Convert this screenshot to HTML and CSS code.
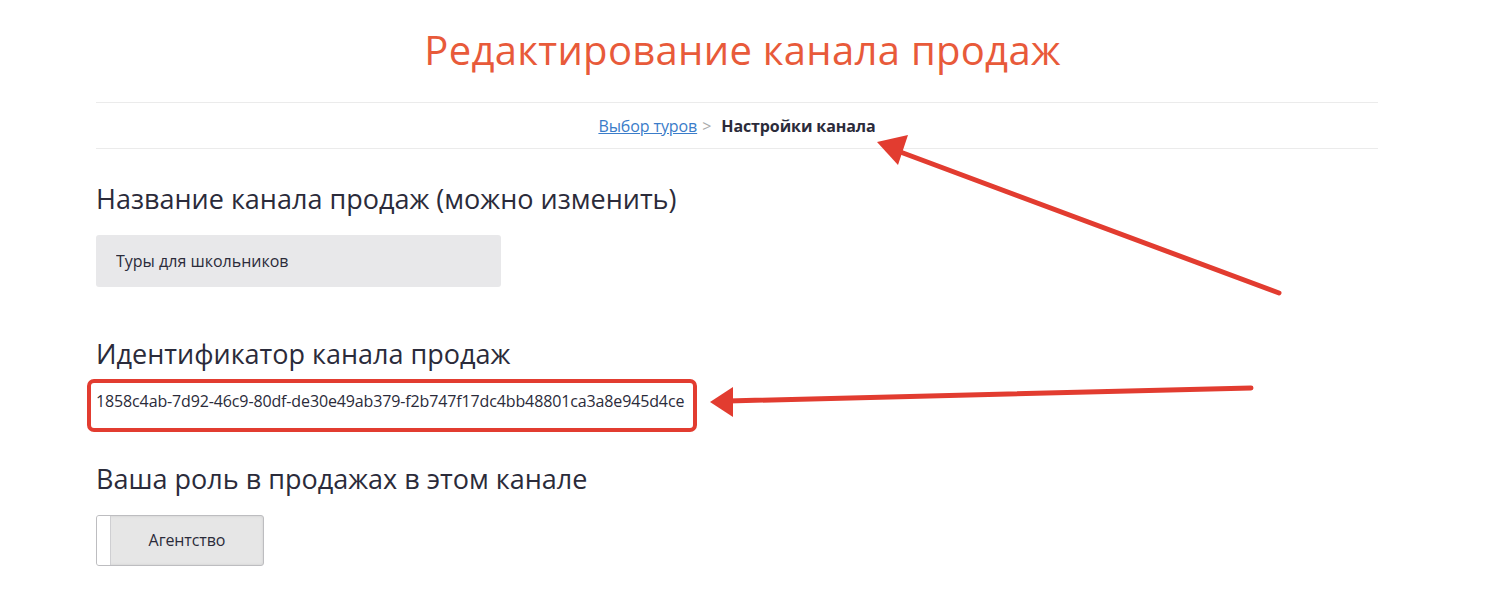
FILE: index.html
```html
<!DOCTYPE html>
<html>

<head lang="ru">
    <meta charset="UTF-8">
    <title>Редактирование канала продаж</title>
    <link rel="stylesheet" href="styles.css">
</head>

<body>
    <h1 class="page-title">Редактирование канала продаж</h1>
    <div class="page">
        <div class="crumbs">
            <a href="javascript:;">Выбор туров</a>
            <span class="crumbs-sep">&gt;</span>
            <b>Настройки канала</b>
        </div>

        <div class="field field-name">
            <h2 class="field-title">Название канала продаж (можно изменить)</h2>
            <input class="field-input" type="text" value="Туры для школьников" />
        </div>

        <div class="field field-id">
            <h2 class="field-title">Идентификатор канала продаж</h2>
            <div class="channel-id">1858c4ab-7d92-46c9-80df-de30e49ab379-f2b747f17dc4bb48801ca3a8e945d4ce</div>
        </div>

        <div class="field field-role">
            <h2 class="field-title">Ваша роль в продажах в этом канале</h2>
            <div class="role-switch">
                <span class="role-knob"></span>
                <span class="role-label">Агентство</span>
            </div>
        </div>
    </div>
    <!-- стрелки-пометки поверх скриншота -->
    <svg class="marks" width="1485" height="596" viewBox="0 0 1485 596">
        <g fill="#e23c30" stroke="#e23c30" stroke-width="5" stroke-linecap="round">
            <line x1="1279" y1="293" x2="895" y2="150" />
            <polygon stroke="none" points="877,142 908,135 898,165" />
            <line x1="1251" y1="388" x2="728" y2="401" />
            <polygon stroke="none" points="710,402 733,387 733,417" />
        </g>
    </svg>
</body>

</html>
```

FILE: styles.css
```css
*,
*::after {
    padding: 0;
    margin: 0;
    box-sizing: border-box;
}

body {
    font-family: "Open Sans", "Noto Sans", sans-serif;
    color: #2b2b3a;
    background: #ffffff;
}

.page-title {
    padding-top: 22px;
    height: 102px;
    text-align: center;
    font-size: 40px;
    font-weight: normal;
    letter-spacing: 0.3px;
    color: #e85a3a;
}

.page {
    width: 1282px;
    margin-left: 96px;
}

.crumbs {
    height: 47px;
    border-top: 1px solid #ebebeb;
    border-bottom: 1px solid #ebebeb;
    display: flex;
    justify-content: center;
    align-items: center;
    gap: 5px;
    font-size: 16px;
    letter-spacing: -0.1px;
}

.crumbs a {
    color: #3a7cc9;
}

.crumbs-sep {
    color: #aaaaaa;
    margin-right: 5px;
}

.crumbs b {
    color: #2b2b3a;
}

.field-title {
    font-size: 27px;
    font-weight: normal;
    line-height: 32px;
}

.field-name {
    margin-top: 34px;
}

.field-id {
    margin-top: 51px;
}

.field-role {
    margin-top: 40px;
}

.field-input {
    display: block;
    margin-top: 20px;
    width: 405px;
    height: 52px;
    border: none;
    border-radius: 3px;
    background: #e8e8ea;
    padding: 0 20px;
    font-family: inherit;
    font-size: 16px;
    color: #2b2b3a;
}

.channel-id {
    position: relative;
    margin-top: 9px;
    height: 44px;
    line-height: 44px;
    font-size: 16px;
    letter-spacing: -0.13px;
}

/* красная рамка-пометка вокруг идентификатора */
.channel-id::after {
    content: "";
    position: absolute;
    left: -9px;
    top: 0;
    width: 610px;
    height: 53px;
    border: 4px solid #e23c30;
    border-radius: 7px;
}

.role-switch {
    margin-top: 20px;
    width: 168px;
    height: 51px;
    border: 1px solid #bdbdc0;
    border-radius: 3px;
    background: #e6e6e6;
    display: flex;
    overflow: hidden;
    box-shadow: inset 0 0 3px rgba(0, 0, 0, .1);
}

.role-knob {
    width: 14px;
    background: #ffffff;
    border-right: 1px solid #cfcfd2;
}

.role-label {
    flex: 1;
    text-align: center;
    line-height: 49px;
    font-size: 16px;
    letter-spacing: -0.1px;
}

.marks {
    position: absolute;
    left: 0;
    top: 0;
    pointer-events: none;
}
```
